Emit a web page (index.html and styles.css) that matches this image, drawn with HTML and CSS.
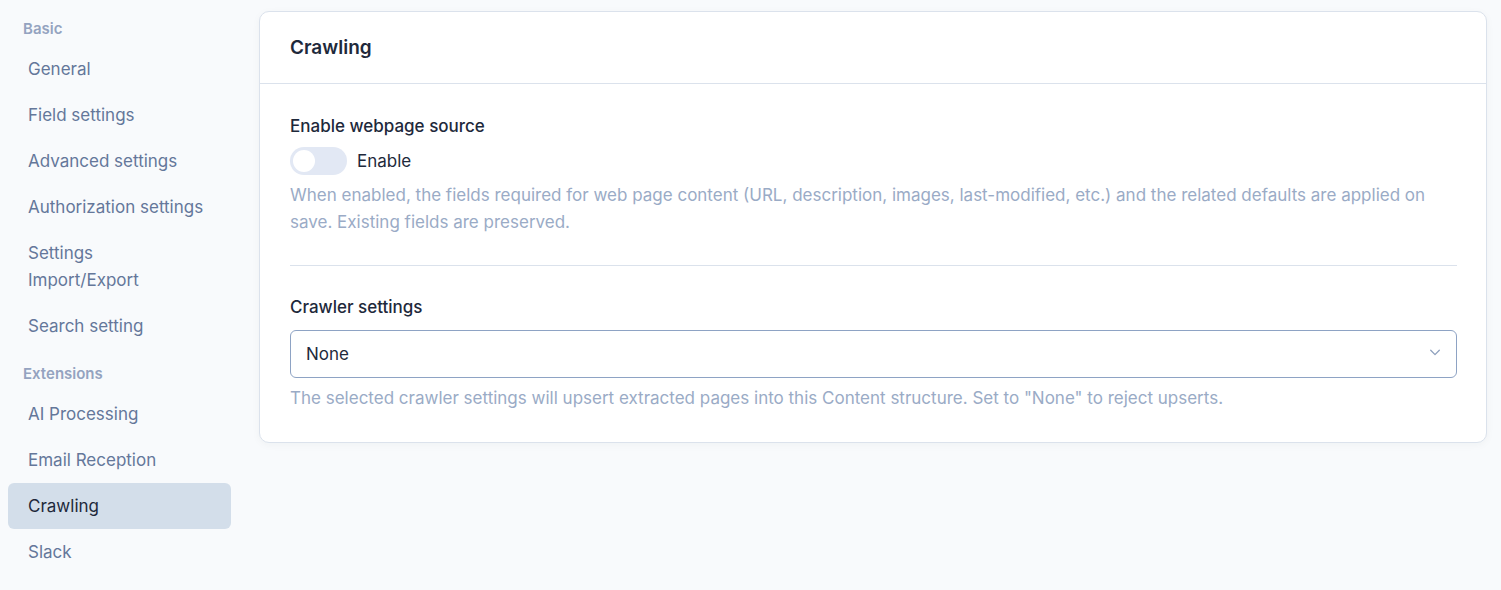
FILE: index.html
```html
<!doctype html>
<html lang="en">
<head>
    <meta charset="UTF-8">
    <title>Crawling</title>
    <link rel="stylesheet" href="styles.css">
</head>
<body>
<div class="page">
    <div class="side">
        <div class="group">Basic</div>
        <a href="javascript:;" class="item">General</a>
        <a href="javascript:;" class="item">Field settings</a>
        <a href="javascript:;" class="item">Advanced settings</a>
        <a href="javascript:;" class="item">Authorization settings</a>
        <a href="javascript:;" class="item">Settings Import/Export</a>
        <a href="javascript:;" class="item">Search setting</a>
        <div class="group">Extensions</div>
        <a href="javascript:;" class="item">AI Processing</a>
        <a href="javascript:;" class="item">Email Reception</a>
        <a href="javascript:;" class="item active">Crawling</a>
        <a href="javascript:;" class="item">Slack</a>
    </div>
    <div class="main">
        <div class="card">
            <div class="card-head">Crawling</div>
            <div class="card-body">
                <div class="field">
                    <div class="label">Enable webpage source</div>
                    <label class="switch">
                        <span class="track"><span class="knob"></span></span>
                        <span>Enable</span>
                    </label>
                    <p class="help">When enabled, the fields required for web page content (URL, description, images, last-modified, etc.) and the related defaults are applied on save. Existing fields are preserved.</p>
                </div>
                <div class="line"></div>
                <div class="field">
                    <div class="label">Crawler settings</div>
                    <div class="select">
                        <span>None</span>
                        <svg width="14" height="14" viewBox="0 0 14 14"><path d="M2 5l5 5 5-5" fill="none" stroke="#8ea0bd" stroke-width="1.5" stroke-linecap="round" stroke-linejoin="round" transform="translate(1 -1) scale(0.86)"/></svg>
                    </div>
                    <p class="help">The selected crawler settings will upsert extracted pages into this Content structure. Set to "None" to reject upserts.</p>
                </div>
            </div>
        </div>
    </div>
</div>
</body>
</html>
```

FILE: styles.css
```css
*{
    margin: 0;
    padding: 0;
    box-sizing: border-box;
}

body{
    background-color: #f8fafc;
    font-family: "Inter", "Noto Sans", sans-serif;
    font-size: 17px;
    color: #64748b;
}

.page{
    display: flex;
    height: 590px;
    overflow: hidden;
}

.side{
    width: 239px;
    padding: 4px 8px 0 8px;
    display: flex;
    flex-direction: column;
}
.group{
    font-size: 15px;
    font-weight: 600;
    color: #94a3c0;
    padding: 13px 15px 5px;
    line-height: 24px;
}
.item{
    display: block;
    padding: 10px 24px 9px 20px;
    line-height: 27px;
    border-radius: 6px;
    color: #64779a;
    text-decoration: none;
    font-size: 17px;
    width: 223px;
}
.item.active{
    background-color: #d3deea;
    color: #1e293b;
}

.main{
    flex: 1;
    padding: 11px 14px 0 20px;
}
.card{
    background: #fff;
    border: 1px solid #dbe2ec;
    border-radius: 10px;
    box-shadow: 0 2px 8px rgba(30, 41, 59, 0.04);
}
.card-head{
    padding: 22px 30px;
    height: 72px;
    border-bottom: 1px solid #dbe2ec;
    font-size: 19px;
    font-weight: 600;
    color: #1e293b;
    line-height: 27px;
}
.card-body{
    padding: 29px 29px 30px 30px;
}
.label{
    font-size: 17px;
    font-weight: 500;
    color: #1e293b;
    line-height: 27px;
}
.switch{
    display: flex;
    align-items: center;
    gap: 10px;
    margin-top: 7px;
    color: #1e293b;
    font-size: 17px;
}
.track{
    width: 57px;
    height: 28px;
    border-radius: 14px;
    background: #e2e8f4;
    padding: 3px;
    display: flex;
}
.knob{
    width: 22px;
    height: 22px;
    border-radius: 50%;
    background: #fff;
}
.help{
    margin-top: 7px;
    font-size: 17px;
    line-height: 27px;
    color: #9aabc6;
}
.line{
    height: 1px;
    background: #dbe2ec;
    margin: 29px 0 28px;
}
.select{
    margin-top: 9px;
    height: 48px;
    border: 1px solid #8ea3c4;
    border-radius: 6px;
    display: flex;
    align-items: center;
    justify-content: space-between;
    padding: 0 14px 0 15px;
    color: #1e293b;
    font-size: 17px;
}
```
